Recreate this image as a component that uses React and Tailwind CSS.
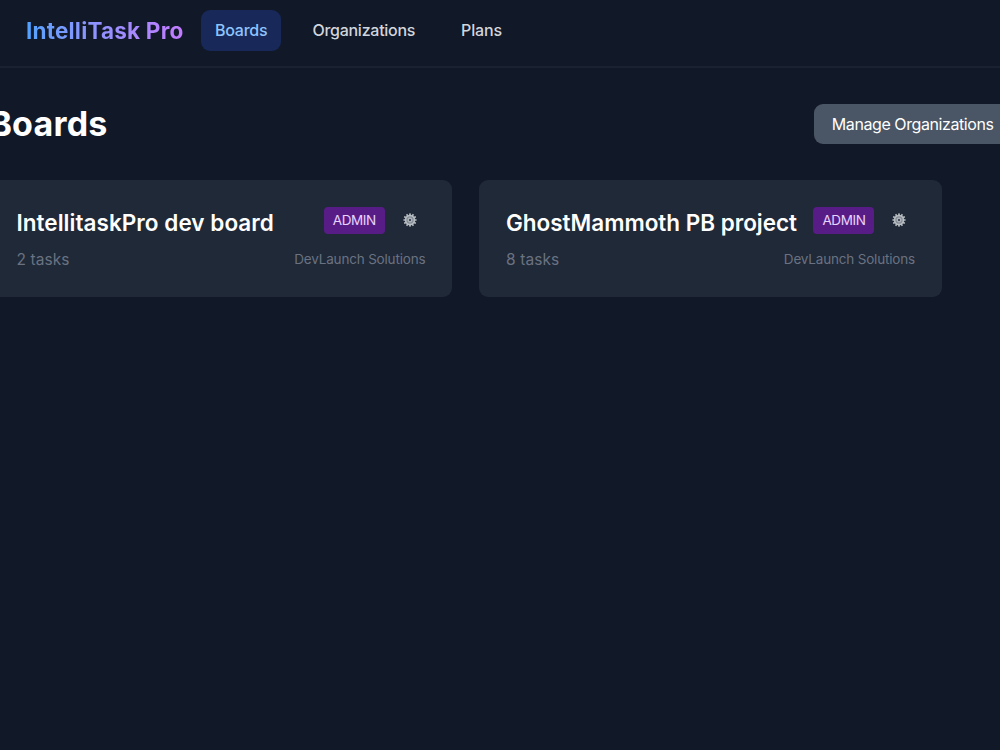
// App.jsx
import React from 'react';

const boards = [
  { id: 1, name: 'IntellitaskPro dev board', tasks: 2, org: 'DevLaunch Solutions', nameClass: 'tracking-[0.05px]' },
  { id: 2, name: 'GhostMammoth PB project', tasks: 8, org: 'DevLaunch Solutions', nameClass: 'tracking-[-0.02px]' },
];

const teeth = [0, 30, 60, 90, 120, 150, 180, 210, 240, 270, 300, 330];

const Gear = () => (
  <svg width="14" height="14" viewBox="0 0 28 28" aria-hidden="true">
    {teeth.map((a) => (
      <path key={a} d="M11.8 5L12.8 0.5H15.2L16.2 5Z" fill="#b4b9bf" transform={`rotate(${a} 14 14)`} />
    ))}
    <circle cx="14" cy="14" r="8.8" fill="#858c95" stroke="#b9bec3" strokeWidth="3" />
    <circle cx="14" cy="14" r="3.8" fill="#4b5563" stroke="#c9cdd1" strokeWidth="2" />
    <circle cx="14" cy="14" r="1.2" fill="#30394a" />
  </svg>
);

const Navbar = () => (
  <nav className="flex h-[68px] items-start border-b-2 border-[#1a2130] pl-[26px] pt-[10px]">
    <div className="flex h-[41px] items-center">
      <span className="w-[157px] whitespace-nowrap bg-gradient-to-r from-blue-400 to-purple-400 bg-clip-text text-[22.5px] font-bold leading-8 tracking-[0.2px] text-transparent">
        IntelliTask Pro
      </span>
      <a className="ml-[18.4px] flex h-[41px] w-20 items-center whitespace-nowrap rounded-[9px] bg-[#172859] pb-px pl-[13.6px] text-[16px] font-medium tracking-[-0.25px] text-blue-300">
        Boards
      </a>
      <a className="ml-[31px] w-[104px] whitespace-nowrap pb-0.5 text-[16px] font-medium tracking-[-0.26px] text-gray-300">
        Organizations
      </a>
      <a className="ml-[44.6px] whitespace-nowrap pb-0.5 text-[16px] font-medium tracking-[-0.1px] text-gray-300">Plans</a>
    </div>
  </nav>
);

const BoardCard = ({ board }) => (
  <div className="h-[117px] w-[463px] shrink-0 rounded-[9px] bg-[#1f2937] px-[27px] pt-[27px]">
    <div className="flex items-start justify-between">
      <h2 className={`whitespace-nowrap pb-px text-[22.5px] font-semibold leading-[31px] text-white ${board.nameClass}`}>
        {board.name}
      </h2>
      <div className="flex items-center pr-[8.6px]">
        <span className="flex h-[27px] w-[61px] items-center justify-center rounded bg-[#581c87] text-[13.5px] tracking-[-0.4px] text-purple-200">
          ADMIN
        </span>
        <button className="ml-[18px] pb-0.5">
          <Gear />
        </button>
      </div>
    </div>
    <div className="mt-[9px] flex items-start justify-between text-gray-500">
      <span className="text-[15.5px] leading-6 tracking-[0.1px]">{board.tasks} tasks</span>
      <span className="text-[13.5px] leading-[22px] tracking-[-0.18px]">{board.org}</span>
    </div>
  </div>
);

const App = () => (
  <div className="h-[750px] w-full overflow-hidden bg-[#111827] font-['Inter',sans-serif]">
    <Navbar />
    <main className="-ml-[10.6px] w-[1042.4px] pt-9">
      <div className="flex h-10 items-center justify-between">
        <h1 className="text-[34px] font-bold leading-10 tracking-[0.2px] text-white">Boards</h1>
        <button className="flex h-10 w-[218px] items-center whitespace-nowrap rounded-[9px] bg-gray-600 pl-[18px] text-[16px] tracking-[-0.42px] text-white">
          Manage Organizations
        </button>
      </div>
      <div className="mt-9 flex gap-[26.6px]">
        {boards.map((board) => (
          <BoardCard key={board.id} board={board} />
        ))}
      </div>
    </main>
  </div>
);

export default App;
